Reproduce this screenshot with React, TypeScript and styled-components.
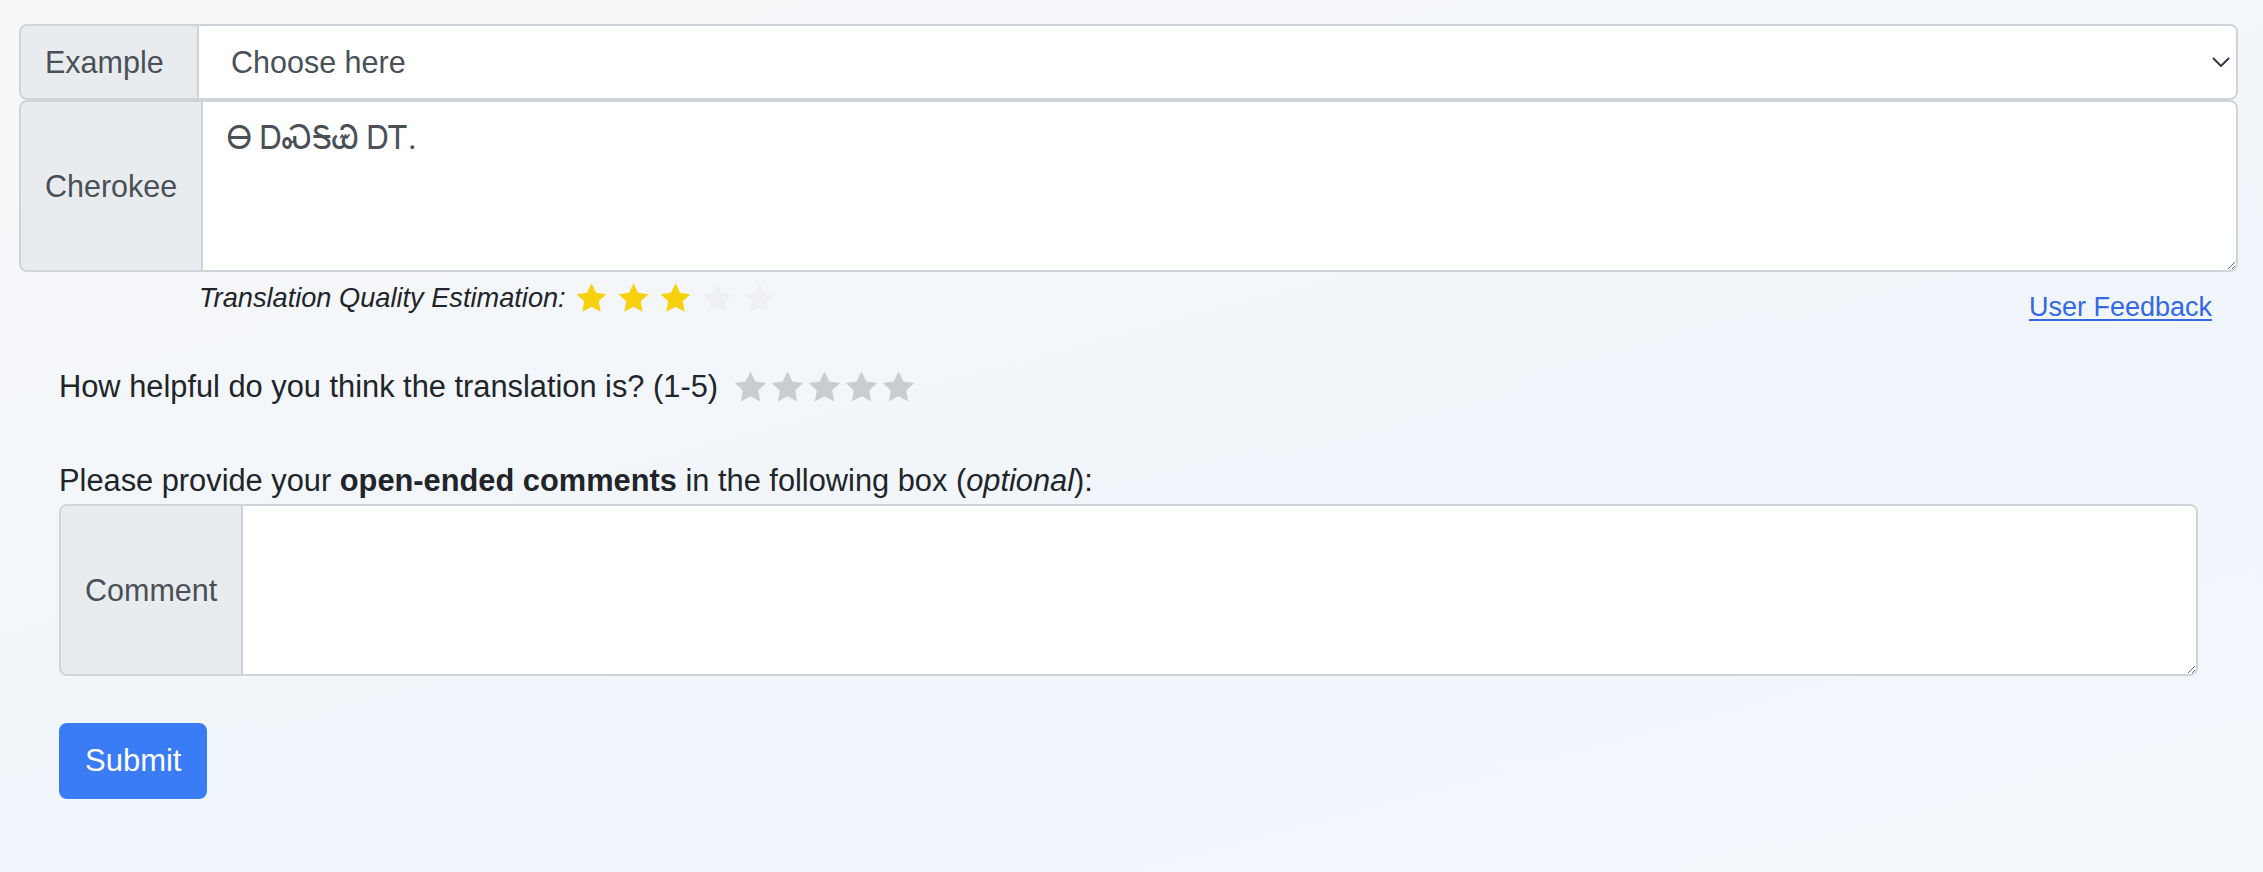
import React from "react";
import styled, { createGlobalStyle } from "styled-components";

const GlobalStyle = createGlobalStyle`
  html, body { margin: 0; padding: 0; }
  body {
    min-height: 100vh;
    background: linear-gradient(165deg, #f7f7f8 0%, #f3f6fa 35%, #f0f6fc 70%, #f2f7fb 100%);
    font-family: "Liberation Sans", Arial, Helvetica, sans-serif;
    color: #212529;
  }
`;

const Page = styled.div`
  box-sizing: border-box;
  min-height: 872px;
  padding: 24px 25px 0 19px;
`;

const InputGroup = styled.div<{ $height: number }>`
  display: flex;
  align-items: stretch;
  height: ${(p) => p.$height}px;
`;

const Addon = styled.label`
  flex: 0 0 180px;
  box-sizing: border-box;
  display: flex;
  align-items: center;
  padding: 0 24px;
  background: #e9ecef;
  border: 2px solid #ced4da;
  border-radius: 8px 0 0 8px;
  color: #495057;
  font-size: 30.5px;
  line-height: 48px;
  white-space: nowrap;
`;

const SelectWrap = styled.div`
  position: relative;
  flex: 1;
  margin-left: -2px;
`;

const Select = styled.select`
  appearance: none;
  -webkit-appearance: none;
  width: 100%;
  height: 100%;
  box-sizing: border-box;
  border: 2px solid #ced4da;
  border-radius: 0 8px 8px 0;
  background: #fff;
  padding: 0 60px 0 32px;
  font-family: inherit;
  font-size: 30.5px;
  color: #495057;
  outline: none;
`;

const Chevron = styled.svg`
  position: absolute;
  right: 8px;
  top: 50%;
  transform: translateY(-50%);
  pointer-events: none;
`;

const TextArea = styled.textarea<{ $serif?: boolean }>`
  flex: 1;
  margin-left: -2px;
  box-sizing: border-box;
  border: 2px solid #ced4da;
  border-radius: 0 8px 8px 0;
  background: #fff;
  padding: 12px 24px;
  font-family: ${(p) =>
    p.$serif ? '"Liberation Serif", "DejaVu Serif", serif' : "inherit"};
  font-size: ${(p) => (p.$serif ? "32px" : "30.5px")};
  line-height: 48px;
  color: #495057;
  resize: vertical;
  outline: none;
`;

const QualityRow = styled.div`
  display: flex;
  justify-content: space-between;
  align-items: flex-start;
  padding: 0 26px 0 180px;
`;

const QualityText = styled.div`
  display: flex;
  align-items: center;
  padding-top: 6px;
  font-size: 27.2px;
  font-style: italic;
  line-height: 40px;
`;

const StarRow = styled.span<{ $gap: number; $offset: number }>`
  display: inline-flex;
  align-items: center;
  gap: ${(p) => p.$gap}px;
  margin-left: ${(p) => p.$offset}px;
`;

const StarIcon = styled.svg`
  display: block;
  flex: none;
`;

const FeedbackLink = styled.a`
  margin-top: 15px;
  font-size: 27px;
  line-height: 40px;
  color: #3668e6;
  text-decoration: underline;
  text-underline-offset: 3px;
`;

const FormSection = styled.div`
  padding: 0 40px;
`;

const HelpfulRow = styled.div`
  display: flex;
  align-items: center;
  margin-top: 37px;
  font-size: 30.8px;
  line-height: 46px;
`;

const Prompt = styled.p`
  margin: 48px 0 0;
  font-size: 30.8px;
  line-height: 46px;
`;

const SubmitButton = styled.button`
  margin-top: 47px;
  background: #3a7bf6;
  color: #fff;
  border: 2px solid #3a7bf6;
  border-radius: 8px;
  padding: 12px 24px;
  font-family: inherit;
  font-size: 31px;
  line-height: 48px;
  cursor: pointer;
`;

const STAR_POINTS =
  "12,1.6 15.1,8.1 22.2,9 17,13.9 18.3,21 12,17.6 5.7,21 7,13.9 1.8,9 8.9,8.1";

const Star = ({ size, color }: { size: number; color: string }) => (
  <StarIcon width={size} height={size} viewBox="0 0 24 24">
    <polygon points={STAR_POINTS} fill={color} />
  </StarIcon>
);

export default function App() {
  const quality = 3;
  return (
    <>
      <GlobalStyle />
      <Page>
        <InputGroup $height={76}>
          <Addon>Example</Addon>
          <SelectWrap>
            <Select defaultValue="">
              <option value="">Choose here</option>
            </Select>
            <Chevron width="18" height="10" viewBox="0 0 18 10">
              <polyline
                points="1,1 9,9 17,1"
                fill="none"
                stroke="#343a40"
                strokeWidth="2"
              />
            </Chevron>
          </SelectWrap>
        </InputGroup>
        <InputGroup $height={172}>
          <Addon>Cherokee</Addon>
          <TextArea $serif defaultValue="Ꮎ ᎠᏍᎦᏯ ᎠᎢ." />
        </InputGroup>

        <QualityRow>
          <QualityText>
            Translation Quality Estimation:
            <StarRow $gap={7} $offset={8}>
              {[0, 1, 2, 3, 4].map((i) => (
                <Star
                  key={i}
                  size={35}
                  color={i < quality ? "#f7d10c" : "#eef0f3"}
                />
              ))}
            </StarRow>
          </QualityText>
          <FeedbackLink href="#">User Feedback</FeedbackLink>
        </QualityRow>

        <FormSection>
          <HelpfulRow>
            How helpful do you think the translation is? (1-5)
            <StarRow $gap={-2} $offset={14}>
              {[0, 1, 2, 3, 4].map((i) => (
                <Star key={i} size={37} color="#c9ccd1" />
              ))}
            </StarRow>
          </HelpfulRow>
          <Prompt>
            Please provide your <b>open-ended comments</b> in the following box (
            <i>optional</i>):
          </Prompt>
          <InputGroup $height={172}>
            <Addon>Comment</Addon>
            <TextArea />
          </InputGroup>
          <SubmitButton type="button">Submit</SubmitButton>
        </FormSection>
      </Page>
    </>
  );
}
